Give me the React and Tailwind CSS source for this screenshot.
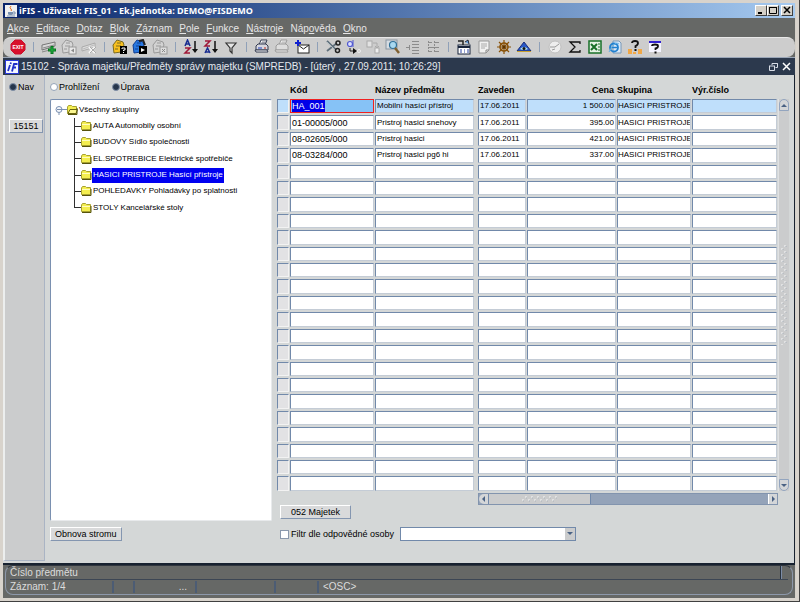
import React, { useState } from 'react';
import clsx from 'clsx';

const MENU = ['Akce', 'Editace', 'Dotaz', 'Blok', 'Záznam', 'Pole', 'Funkce', 'Nástroje', 'Nápověda', 'Okno'];

// position of the underlined letter, first one when not listed
const MNEMONIC = { Nápověda: 3 };

const GROUPS = [
    'AUTA Automobily osobní',
    'BUDOVY Sídlo společnosti',
    'EL.SPOTREBICE Elektrické spotřebiče',
    'HASICI PRISTROJE Hasící přístroje',
    'POHLEDAVKY Pohladávky po splatnosti',
    'STOLY Kancelářské stoly',
];

const RECORDS = [
    { kod: 'HA_001', nazev: 'Mobilní hasící přístroj', zaveden: '17.06.2011', cena: '1 500.00', skupina: 'HASICI PRISTROJE' },
    { kod: '01-00005/000', nazev: 'Pristroj hasici snehovy', zaveden: '17.06.2011', cena: '395.00', skupina: 'HASICI PRISTROJE' },
    { kod: '08-02605/000', nazev: 'Pristroj hasici', zaveden: '17.06.2011', cena: '421.00', skupina: 'HASICI PRISTROJE' },
    { kod: '08-03284/000', nazev: 'Pristroj hasici pg6 hi', zaveden: '17.06.2011', cena: '337.00', skupina: 'HASICI PRISTROJE' },
];

const ROW_COUNT = 24;
const ROWS = Array.from({ length: ROW_COUNT }, (_, i) => RECORDS[i] || {});

const COLUMNS = [
    { key: 'kod', label: 'Kód' },
    { key: 'nazev', label: 'Název předmětu' },
    { key: 'spacer' },
    { key: 'zaveden', label: 'Zaveden' },
    { key: 'cena', label: 'Cena' },
    { key: 'skupina', label: 'Skupina' },
    { key: 'vyrcislo', label: 'Výr.číslo' },
];

function Icon({ children }) {
    return (
        <svg viewBox="0 0 16 16" className="w-4 h-4" fill="none" aria-hidden="true">
            {children}
        </svg>
    );
}

const card = (fill, stroke) => (
    <>
        <path d="M1 6 L5 1 L11 3 L12 6 L9 13 L2 14 Z" fill={fill} stroke={stroke} />
        <path d="M5 4 h4 M4 7 h5 M3 10 h3" stroke={stroke} />
    </>
);

const printer = (body, line, paper) => (
    <>
        <path d="M5 6 L7 1 H13 L11 6 Z" fill={paper} stroke={line} />
        <path d="M7 4 h4 M8 3 h4" stroke={line} strokeWidth=".6" />
        <path d="M2 7 L4 5 H12 L14 7 V11 H2 Z" fill={body} stroke={line} />
        <path d="M1 11 H13 L14 13 H2 Z" fill={paper} stroke={line} />
    </>
);

const TOOLBAR = [
    [
        ['Konec', <Icon><path d="M5 1 H11 L15 5 V11 L11 15 H5 L1 11 V5 Z" fill="#d8102c" stroke="#c8102c" /><text x="8" y="10" textAnchor="middle" fontSize="5" fontWeight="700" fill="#fff">EXIT</text></Icon>],
    ],
    [
        ['Nový záznam', <Icon><path d="M1 6 L14 3 V7 L1 11 Z" fill="#d8d8d8" stroke="#777" /><path d="M1 13 L9 11 M2 9 L13 6" stroke="#888" /><path d="M11 7 V15 M7 11 H15" stroke="#087820" strokeWidth="3" /><path d="M11 8 V14 M8 11 H14" stroke="#20b040" /></Icon>],
        ['Kopie záznamu', <Icon>{card('#d6d6d6', '#9a9a9a')}<rect x="8" y="8" width="7" height="7" fill="#e8e8e8" stroke="#999" /><path d="M10 11.500 L13 9.500 V13.500 Z" fill="#888" /></Icon>],
        ['Smazat záznam', <Icon><path d="M1 8 L14 4 V8 L1 12 Z" fill="#ddd" stroke="#aaa" /><path d="M2 10 L13 6" stroke="#bbb" /><path d="M8 8 L14 14 M14 8 L8 14" stroke="#f6f6f6" strokeWidth="2" /><path d="M9 8 L15 14 M15 8 L9 14" stroke="#aaa" /></Icon>],
    ],
    [
        ['Zadat dotaz', <Icon>{card('#f8c020', '#7a6a20')}<rect x="8" y="7" width="7" height="8" fill="#000" /><path d="M10 10 V9 H13 V11 H11.500 V12 M11.500 13 V14" stroke="#fff" /></Icon>],
        ['Provést dotaz', <Icon>{card('#2878e0', '#103c90')}<path d="M7 2 L11 1 L13 6" stroke="#222" strokeWidth="2" /><rect x="7" y="7" width="8" height="8" fill="#000" /><path d="M9 9 L13 11 L9 13 Z" fill="#fff" /></Icon>],
        ['Zrušit dotaz', <Icon>{card('#d2d2d2', '#999')}<rect x="8" y="8" width="7" height="7" fill="#ddd" stroke="#999" /><path d="M10 10 L13 13 M13 10 L10 13" stroke="#888" /></Icon>],
    ],
    [
        ['Třídit vzestupně', <Icon><path d="M2 7 L4.500 1 L7 7 M3 5 H6" stroke="#182c90" strokeWidth="1.500" /><path d="M2 9 H7 L2 14 H7" stroke="#a01838" strokeWidth="1.500" /><path d="M12 2 V12" stroke="#111" strokeWidth="1.500" /><path d="M9 10 H15 L12 14 Z" fill="#111" /></Icon>],
        ['Třídit sestupně', <Icon><path d="M2 2 H7 L2 7 H7" stroke="#a01838" strokeWidth="1.500" /><path d="M2 14 L4.500 9 L7 14 M3 13 H6" stroke="#182c90" strokeWidth="1.500" /><path d="M12 2 V12" stroke="#111" strokeWidth="1.500" /><path d="M9 10 H15 L12 14 Z" fill="#111" /></Icon>],
        ['Filtr', <Icon><path d="M3 4 H13 L9 9 V14 L7 12 V9 Z" fill="#e4e4e4" stroke="#333" strokeWidth="1.200" /></Icon>],
    ],
    [
        ['Tisk', <Icon>{printer('#d8d8e0', '#333a50', '#fff')}<path d="M4 9 H8" stroke="#2040c0" /><path d="M10 9 H12" stroke="#c03020" /></Icon>],
        ['Náhled', <Icon>{printer('#ddd', '#9a9a9a', '#eee')}</Icon>],
        ['Odeslat', <Icon><rect x="4" y="6" width="11" height="8" fill="#fff" stroke="#222" /><path d="M4 6 L9.500 10 L15 6" stroke="#222" /><path d="M4 1 V7 M1 4 H7" stroke="#1020d0" strokeWidth="2" /></Icon>],
    ],
    [
        ['Vyjmout', <Icon><path d="M2 2 L11 11 M2 12 L12 4" stroke="#60707c" strokeWidth="1.800" /><path d="M2 3 L10 11" stroke="#dfe8ea" strokeWidth=".6" /><circle cx="13" cy="4" r="2" stroke="#222" strokeWidth="1.500" /><circle cx="12.500" cy="11.500" r="2" stroke="#222" strokeWidth="1.500" /></Icon>],
        ['Kopírovat', <Icon><circle cx="5" cy="5" r="2.500" fill="#dde0ff" stroke="#5058d0" strokeWidth="1.200" /><path d="M8 1 V8" stroke="#5058d0" /><path d="M5 9 V12 H9" stroke="#222" /><path d="M8 9 L12 12 L8 15 Z" fill="#111" /><circle cx="14" cy="12" r="1.500" stroke="#eee" /></Icon>],
        ['Vložit', <Icon><rect x="2" y="2" width="5" height="6" fill="#e2e2e2" stroke="#aaa" /><path d="M8 4 H12 V8 M10 7 L12 9 L14 7" stroke="#aaa" /><rect x="10" y="9" width="4" height="5" fill="#eee" stroke="#aaa" /></Icon>],
        ['Hledat', <Icon><rect x="1" y="1" width="11" height="9" fill="#d6dce2" stroke="#8a96a2" /><circle cx="8" cy="6" r="3.500" fill="#a8d8f0" stroke="#307098" strokeWidth="1.200" /><path d="M10 9 L14 14" stroke="#806030" strokeWidth="2.400" /></Icon>],
        ['Odsadit', <Icon><path d="M7 2.500 H14 M7 5.500 H14 M7 8.500 H14 M7 11.500 H14 M7 14.500 H14" stroke="#8c8c8c" /><path d="M1 8.500 H5 M4.500 6 V11" stroke="#8c8c8c" /></Icon>],
        ['Strom', <Icon><path d="M3.500 2 V14 M9.500 2 V14" stroke="#8c8c8c" strokeDasharray="2 1" /><path d="M3 3.500 H7 M3 8.500 H14 M3 12.500 H7 M10 3.500 H14 M10 12.500 H14" stroke="#8c8c8c" /></Icon>],
    ],
    [
        ['Kalendář', <Icon><rect x="2" y="6" width="12" height="9" fill="#fff" stroke="#18243c" /><path d="M2 8 H14" stroke="#18243c" strokeWidth="2" /><path d="M4 11 H6 M8 11 H9 M11 11 H13 M4 13 H6 M8 13 H9 M11 13 H13" stroke="#2840a0" /><path d="M2 2 H7 V6" stroke="#222" strokeWidth="1.500" /><path d="M9 3 L12 1 L13 5" fill="#60a0e0" stroke="#223" /></Icon>],
        ['Poznámka', <Icon><path d="M3 2 H13 V11 L10 14 H3 Z" fill="#f0f0f0" stroke="#999" /><path d="M5 5 H11 M5 7 H11 M5 9 H9" stroke="#aaa" /><path d="M10 14 V11 H13" stroke="#888" /></Icon>],
        ['Navigátor', <Icon><circle cx="8" cy="8" r="4" stroke="#8a5208" strokeWidth="1.600" /><path d="M8 1 V15 M1 8 H15 M3 3 L13 13 M13 3 L3 13" stroke="#8a5208" strokeWidth="1.200" /><circle cx="8" cy="8" r="1.500" fill="#5a3404" /></Icon>],
        ['Zobrazit', <Icon><path d="M1 12 L8 3 L15 12 Z" fill="#2858c8" stroke="#182c78" /><path d="M4 10 Q8 6 12 10 Q8 12 4 10" fill="#b8e8f0" /><circle cx="8" cy="9.500" r="1.500" fill="#111" /><path d="M1 12.500 H15" stroke="#c8a030" /></Icon>],
    ],
    [
        ['Hodiny', <Icon><circle cx="8" cy="8" r="6" fill="#eee" stroke="#c0c0c0" /><path d="M3 8 H8 L12 5 M5 11 L8 10" stroke="#999" /></Icon>],
        ['Součet', <Icon><path d="M13 5 V3 H3 L8 8 L3 13 H13 V11" stroke="#111" strokeWidth="1.300" /></Icon>],
        ['Export do Excelu', <Icon><rect x="2" y="2" width="12" height="12" fill="#e4f2e4" stroke="#187028" strokeWidth="1.500" /><path d="M4 5 L10 11 M10 5 L4 11" stroke="#187028" strokeWidth="2" /><path d="M11 5 H13 M11 8 H13 M11 11 H13" stroke="#187028" /></Icon>],
        ['Prohlížeč', <Icon><path d="M6 2 H12 L14 4 V14 H6 Z" fill="#d8e8f8" stroke="#7898b8" /><circle cx="7" cy="8.500" r="4" stroke="#2080d0" strokeWidth="1.800" /><path d="M4 8.500 H10" stroke="#2080d0" strokeWidth="1.500" /><path d="M2 13 Q8 1 12 5" stroke="#60b0e8" /></Icon>],
        ['Nápověda k poli', <Icon><path d="M1 10 H5 V15 H1 Z M11 10 H15 V15 H11 Z M6 13 H9 V15 H6 Z" fill="#f0a848" /><path d="M5 4 Q5 2 8 2 Q11 2 11 4 Q11 6 8.500 7 V9" stroke="#111" strokeWidth="1.800" /><path d="M7.500 11 H9.500" stroke="#111" strokeWidth="2" /></Icon>],
        ['Nápověda', <Icon><rect x="2" y="2" width="12" height="11" fill="#f4f4ff" /><path d="M2 3 H14" stroke="#3020d0" strokeWidth="2" /><path d="M5 7 Q5 5.500 8 5.500 Q11 5.500 11 7 Q11 9 8.500 9.500 V11" stroke="#111" strokeWidth="1.800" /><path d="M7.500 13.500 H9.500" stroke="#111" strokeWidth="2" /></Icon>],
    ],
];

function TitleBar() {
    return (
        <header className="flex items-center h-[15px] px-0.5 bg-linear-to-r from-[#0a246a] to-[#a6caf0]">
            <svg viewBox="0 0 12 12" className="w-3 h-3 bg-[#f0f0f0]" fill="none" aria-hidden="true">
                <path d="M6 1 Q4 3 6 4 Q7 5 6 6" stroke="#e07020" />
                <path d="M3 7 H8 V9 Q8 10 6 10 H5 Q3 10 3 9 Z" fill="#7890b0" />
                <path d="M8 7 H10 V9 H8 M2 11 H10" stroke="#7890b0" />
            </svg>
            <h1 className="flex-1 ml-0.5 font-[Noto_Sans,DejaVu_Sans,sans-serif] font-bold text-[9px] leading-3 text-white whitespace-nowrap">
                iFIS - Uživatel: FIS_01 - Ek.jednotka: DEMO@FISDEMO
            </h1>
            <div className="flex">
                <WindowButton label="Minimalizovat"><path d="M2 7 H6" stroke="#000" strokeWidth="2" /></WindowButton>
                <WindowButton label="Maximalizovat"><path d="M1.500 1 V7.500 H8.500 V1 M1 1.500 H9" stroke="#000" /></WindowButton>
                <span className="w-0.5" />
                <WindowButton label="Zavřít"><path d="M2 1 L8 7 M8 1 L2 7" stroke="#000" strokeWidth="1.500" /></WindowButton>
            </div>
        </header>
    );
}

function WindowButton({ label, children }) {
    return (
        <button type="button" aria-label={label} className="flex items-center justify-center w-3 h-[11px] bg-[#d4d0c8] border border-t-white border-l-white border-r-[#404040] border-b-[#404040]">
            <svg viewBox="0 0 10 9" className="w-2.5 h-[9px]" fill="none">{children}</svg>
        </button>
    );
}

function MenuBar() {
    return (
        <nav className="flex items-center gap-[7px] h-[19px] pt-0.5 px-1 bg-[#666866] text-[10px] leading-3 text-[#e6e6e6]">
            {MENU.map((item) => {
                const at = MNEMONIC[item] || 0;
                return (
                    <a key={item} href="#" className="whitespace-nowrap">
                        {item.slice(0, at)}
                        <span className="underline">{item[at]}</span>
                        {item.slice(at + 1)}
                    </a>
                );
            })}
        </nav>
    );
}

function Toolbar() {
    return (
        <div className="bg-[#666866]">
            <div className="flex items-center h-5 pl-[5px] pb-px bg-[#cdcdcd] border-t border-[#e8e8e8] rounded-lg">
                {TOOLBAR.map((group, i) => (
                    <React.Fragment key={i}>
                        {i > 0 && <span className="w-px h-2.5 mx-[5px] bg-[#8fa0b8]" />}
                        {group.map(([label, icon]) => (
                            <button key={label} type="button" aria-label={label} className="flex items-center justify-center w-5 h-[18px]">
                                {icon}
                            </button>
                        ))}
                    </React.Fragment>
                ))}
            </div>
        </div>
    );
}

function FormTitle() {
    return (
        <div className="flex items-center h-[18px] px-0.5 bg-[#2c394d] border-t border-[#9aa6b8] text-[10px] leading-3 text-[#e4e8ee]">
            <svg viewBox="0 0 14 14" className="w-3.5 h-3.5" fill="none" aria-hidden="true">
                <rect width="14" height="14" fill="#2838d8" />
                <rect x="1" y="1" width="12" height="12" fill="#f4f6ff" />
                <path d="M5 5 L3 11 M6 2.500 L5.500 4 M7 11.500 L9 4 H12.500 M8 7.500 H11" stroke="#2030c8" strokeWidth="1.800" />
            </svg>
            <h2 className="flex-1 ml-0.5 whitespace-nowrap">
                15102 - Správa majetku/Předměty správy majetku (SMPREDB) - [úterý , 27.09.2011; 10:26:29]
            </h2>
            <button type="button" aria-label="Obnovit okno" className="mr-1">
                <svg viewBox="0 0 9 9" className="w-[9px] h-[9px]" fill="none">
                    <path d="M3 3 V1.500 H8.500 V5.500 H6.500 M3 1.500 H8.500" stroke="#d8dde6" />
                    <path d="M0.500 4 V8.500 H5.500 V4 M0 4 H6" stroke="#d8dde6" />
                </svg>
            </button>
            <button type="button" aria-label="Zavřít formulář" className="mr-0.5">
                <svg viewBox="0 0 9 9" className="w-[9px] h-[9px]" fill="none">
                    <path d="M1 1 L8 8 M8 1 L1 8" stroke="#fff" strokeWidth="1.500" />
                </svg>
            </button>
        </div>
    );
}

function Radio({ label, ...rest }) {
    return (
        <label className="flex items-center gap-px h-3 text-[9px] leading-3">
            <input
                type="radio"
                className="appearance-none w-2 h-2 rounded-full bg-white border border-[#94a3b8] checked:bg-[#26364c] checked:border-[#8090a8]"
                {...rest}
            />
            {label}
        </label>
    );
}

function PushButton({ className, children }) {
    return (
        <button type="button" className={clsx('h-3.5 bg-[#d9dadb] border border-t-white border-l-white border-r-[#8496b0] border-b-[#8496b0] text-[9px] leading-3 whitespace-nowrap', className)}>
            {children}
        </button>
    );
}

function Folder({ open }) {
    return (
        <svg viewBox="0 0 11 10" className="shrink-0 w-[11px] h-2.5" fill="none" aria-hidden="true">
            <path d="M0.500 2 L1.500 0.500 H4.500 L5.500 1.500 H9.500 V8.500 H0.500 Z" fill="#f4ee50" stroke="#a8a230" />
            {open && <path d="M1 8.500 L3 4.500 H10.500 L9 8.500 Z" fill="#fbf690" stroke="#6a6610" />}
            {!open && <path d="M1 3.500 H9" stroke="#fffcc0" />}
            <path d="M1 9.500 H10 V3" stroke="#57540c" />
        </svg>
    );
}

function Tree() {
    const [selected, setSelected] = useState(3);

    return (
        <div className="flex-1 mt-1.5 pt-0.5 pl-1 bg-white border border-[#7a90b0] border-r-[#e8eaec] border-b-[#e8eaec] rounded-xs text-[8px] leading-3 text-black">
            <div className="flex items-center h-4">
                <svg viewBox="0 0 12 10" className="w-3 h-2.5" fill="none" aria-hidden="true">
                    <circle cx="4" cy="4.500" r="3" fill="#f4f6fa" stroke="#7a90b0" />
                    <path d="M2 4.500 H12 M4 7.500 V10" stroke="#7a90b0" />
                </svg>
                <Folder open />
                <span className="ml-px">Všechny skupiny</span>
            </div>
            <ul className="grid auto-rows-fr h-[98px] ml-[19px]">
                {GROUPS.map((group, i) => (
                    <li key={group} className="flex items-center">
                        <span className="flex flex-col self-stretch w-[7px]">
                            <span className="flex-1 border-l border-b border-[#303030]" />
                            <span className={clsx('flex-1', i < GROUPS.length - 1 && 'border-l border-[#303030]')} />
                        </span>
                        <Folder />
                        <button
                            type="button"
                            onClick={() => setSelected(i)}
                            className={clsx('px-px h-[15px] whitespace-nowrap', selected === i && 'bg-[#0000f0] text-white')}
                        >
                            {group}
                        </button>
                    </li>
                ))}
            </ul>
        </div>
    );
}

function Records() {
    const [current, setCurrent] = useState(0);

    return (
        <table className="h-full w-full table-fixed border-separate border-spacing-x-px border-spacing-y-0.5 text-[8px] leading-3">
            <colgroup>
                <col className="w-3" />
                <col className="w-[84px]" />
                <col className="w-[99px]" />
                <col className="w-0.5" />
                <col className="w-12" />
                <col className="w-[89px]" />
                <col className="w-[74px]" />
                <col />
            </colgroup>
            <thead>
                <tr className="h-3.5 text-[9px] text-left whitespace-nowrap">
                    <td />
                    {COLUMNS.map(({ key, label }) => (
                        label
                            ? <th key={key} className={clsx('p-0 font-bold', key === 'cena' && 'pr-0.5 text-right')}>{label}</th>
                            : <td key={key} />
                    ))}
                </tr>
            </thead>
            <tbody>
                {ROWS.map((row, i) => (
                    <tr key={i} onClick={() => setCurrent(i)}>
                        <td className={clsx('p-0 border border-[#7189aa] border-r-[#f2f2f2] border-b-[#f2f2f2]', i === current ? 'bg-[#bfdffb]' : 'bg-[#e2e2e4]')} />
                        {COLUMNS.map(({ key, label }) => {
                            if (!label) {
                                return <td key={key} />;
                            }
                            const active = i === current && key === 'kod';
                            return (
                                <td
                                    key={key}
                                    className={clsx(
                                        'p-0 border',
                                        active ? 'border-[#f02020] bg-[#86c2f6]' : 'border-[#7189aa] border-r-[#c4ccd6] border-b-[#c4ccd6]',
                                        !active && (i === current ? 'bg-[#bfdffb]' : 'bg-white'),
                                    )}
                                >
                                    <input
                                        type="text"
                                        aria-label={`${label} ${i + 1}`}
                                        defaultValue={row[key] || ''}
                                        autoFocus={active}
                                        onFocus={(e) => e.target.select()}
                                        className={clsx(
                                            'block w-full h-3 outline-none selection:bg-[#0000e8] selection:text-white',
                                            key !== 'skupina' && 'pl-px',
                                            key === 'kod' && 'text-[9px]',
                                            key === 'cena' && 'pr-px text-right',
                                        )}
                                    />
                                </td>
                            );
                        })}
                    </tr>
                ))}
            </tbody>
        </table>
    );
}

function Arrow({ d }) {
    return (
        <svg viewBox="0 0 8 8" className="w-2 h-2" aria-hidden="true">
            <path d={d} fill="#4a6284" />
        </svg>
    );
}

function VerticalScroll() {
    return (
        <div className="flex flex-col w-[11px] mt-[18px] mb-0.5 bg-[#cbcccd] border-l border-[#dfe1e3]">
            <button type="button" aria-label="Nahoru" className="flex items-center justify-center h-3 bg-[#d4d6d8] border border-[#93a5bf] rounded-t-md">
                <Arrow d="M1 6 L4 3 L7 6 Z" />
            </button>
            <div className="flex flex-1 items-center justify-center">
                <svg viewBox="0 0 6 100" className="w-1.5 h-[100px]" aria-hidden="true">
                    <path d="M1 3 V100 M4 0 V100" stroke="#f6f6f6" strokeDasharray="2 4" />
                    <path d="M2 4 V100 M5 1 V100" stroke="#a9b0ba" strokeDasharray="1 5" />
                </svg>
            </div>
            <button type="button" aria-label="Dolů" className="flex items-center justify-center h-3 bg-[#d4d6d8] border border-[#93a5bf] rounded-b-md">
                <Arrow d="M1 3 L4 6 L7 3 Z" />
            </button>
        </div>
    );
}

function HorizontalScroll() {
    return (
        <div className="flex h-3 ml-[202px] mr-[11px] bg-[#94a3b9] border border-[#8294ae]">
            <button type="button" aria-label="Vlevo" className="flex items-center justify-center w-2.5 bg-[#d4d6d8] border-r border-[#7189aa] rounded-l-md">
                <Arrow d="M5 1 L2 4 L5 7 Z" />
            </button>
            <div className="flex items-center justify-center w-[102px] bg-[#cbcccd] border-r border-[#7189aa]">
                <svg viewBox="0 0 36 6" className="w-9 h-1.5" aria-hidden="true">
                    <path d="M3 1 H36 M0 4 H33" stroke="#f6f6f6" strokeDasharray="2 4" />
                    <path d="M4 2 H36 M1 5 H34" stroke="#a9b0ba" strokeDasharray="1 5" />
                </svg>
            </div>
            <button type="button" aria-label="Vpravo" className="flex items-center justify-center w-[9px] ml-auto bg-[#d4d6d8] border-l border-white">
                <Arrow d="M3 1 L6 4 L3 7 Z" />
            </button>
        </div>
    );
}

function StatusBar() {
    return (
        <footer className="px-0.5 pb-[3px] bg-[#666866] text-[10px] leading-3 text-[#dcdcdc]">
            <div className="px-1 border border-[#8d98aa] border-t-[#30363f] rounded-lg">
                <div className="flex h-3.5 items-center border-b border-[#3c4654]">
                    <span className="flex-1">Číslo předmětu</span>
                    <span className="self-stretch w-0.5 mr-1.5 border-l border-[#26303e] bg-[#7c8ca6]" />
                </div>
                <div className="flex h-3.5 items-center">
                    <span className="w-[102px]">Záznam: 1/4</span>
                    <span className="w-[21px] h-3 border-l-2 border-[#4c5c74]" />
                    <span className="w-[62px] h-3 pr-2 border-l-2 border-[#4c5c74] text-right">...</span>
                    <span className="w-[79px] h-3 border-l-2 border-[#4c5c74]" />
                    <span className="w-[43px] h-3 border-l-2 border-[#4c5c74]" />
                    <span className="flex-1 h-3 pl-1 border-l-2 border-[#4c5c74]">&lt;OSC&gt;</span>
                </div>
            </div>
        </footer>
    );
}

export default function App() {
    const [mode, setMode] = useState('uprava');

    return (
        <div className="flex flex-col h-screen p-[3px] bg-[#d8d3cc] border-r border-b border-[#404040] font-[Liberation_Sans,Arial,sans-serif] text-black">
            <div className="flex flex-col flex-1 min-h-0 pr-px bg-[#d4d0c8]">
                <TitleBar />
                <MenuBar />
                <Toolbar />
                <FormTitle />
                <main className="flex flex-1 min-h-0 bg-[#d4d7d7] border-b-2 border-r border-[#182230]">
                    <aside className="flex flex-col w-[42px] pl-1 pt-1.5 mb-0.5 bg-[#cbcccd] border-l-2 border-l-[#eceeee] border-r border-b border-r-[#aab4c4] border-b-[#aab4c4]">
                        <Radio label="Nav" name="nav" defaultChecked />
                        <PushButton className="mt-[26px] mr-px">15151</PushButton>
                    </aside>

                    <section className="flex flex-col w-[227px] pl-[5px] pt-1.5 pb-[22px]">
                        <div className="flex gap-3">
                            <Radio label="Prohlížení" name="mode" checked={mode === 'prohlizeni'} onChange={() => setMode('prohlizeni')} />
                            <Radio label="Úprava" name="mode" checked={mode === 'uprava'} onChange={() => setMode('uprava')} />
                        </div>
                        <Tree />
                        <PushButton className="self-start mt-1.5 px-1">Obnova stromu</PushButton>
                    </section>

                    <section className="flex flex-col flex-1 min-w-0 pl-1 pr-[5px] pt-1.5 pb-[22px]">
                        <div className="flex flex-1 min-h-0">
                            <div className="flex-1 min-w-0">
                                <Records />
                            </div>
                            <VerticalScroll />
                        </div>
                        <HorizontalScroll />
                        <PushButton className="self-start ml-1 px-2.5 border-t-transparent">052 Majetek</PushButton>
                        <div className="flex items-center mt-2 ml-1">
                            <input id="filtr" type="checkbox" className="appearance-none w-[9px] h-[9px] mr-0.5 bg-white border border-[#8a98ac] checked:bg-[#26364c]" />
                            <label htmlFor="filtr" className="w-[109px] text-[9px] leading-3 whitespace-nowrap">Filtr dle odpovědné osoby</label>
                            <div className="relative">
                                <select aria-label="Odpovědná osoba" className="block appearance-none w-44 h-3.5 px-1 bg-white border border-[#7189aa] text-[9px] leading-3">
                                    <option></option>
                                </select>
                                <span className="absolute top-px right-px flex items-center justify-center w-2.5 h-3 bg-[#cbcccd] pointer-events-none">
                                    <Arrow d="M1 2 L4 5 L7 2 Z" />
                                </span>
                            </div>
                        </div>
                    </section>
                </main>
                <StatusBar />
            </div>
        </div>
    );
}
